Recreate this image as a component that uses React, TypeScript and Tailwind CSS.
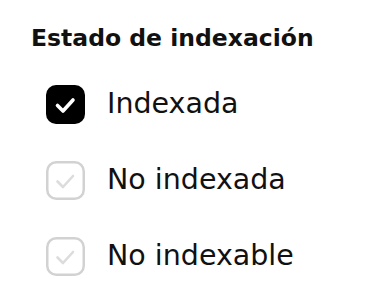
import React from "react";

type Option = { id: string; label: string; checked: boolean };

const options: Option[] = [
  { id: "indexada", label: "Indexada", checked: true },
  { id: "no-indexada", label: "No indexada", checked: false },
  { id: "no-indexable", label: "No indexable", checked: false },
];

function Check({ checked }: { checked: boolean }) {
  return (
    <svg viewBox="0 0 39 39" className="h-[39px] w-[39px] shrink-0" fill="none">
      {checked ? (
        <rect x="0" y="0" width="39" height="39" rx="10" fill="#000" />
      ) : (
        <rect x="1.25" y="1.25" width="36.5" height="36.5" rx="9" stroke="#d2d2d2" strokeWidth="2.5" fill="#fff" />
      )}
      <path
        d="M11.5 20.5l5.5 5.5 10-11"
        stroke={checked ? "#ffffff" : "#dcdcdc"}
        strokeWidth={checked ? 3.6 : 2.6}
        strokeLinecap="round"
        strokeLinejoin="round"
      />
    </svg>
  );
}

export default function App() {
  return (
    <div className="h-[308px] w-[382px] bg-white pt-[24px] text-[#111]" style={{ fontFamily: "'DejaVu Sans', sans-serif" }}>
      <h2 className="pl-[31px] text-[23.5px] font-semibold leading-[28px]">Estado de indexación</h2>
      <ul className="mt-[33px] flex flex-col gap-[37px] pl-[46px]">
        {options.map((o) => (
          <li key={o.id} className="flex h-[39px] items-center gap-[22px]">
            <Check checked={o.checked} />
            <span className="text-[28.5px] leading-none">{o.label}</span>
          </li>
        ))}
      </ul>
    </div>
  );
}
